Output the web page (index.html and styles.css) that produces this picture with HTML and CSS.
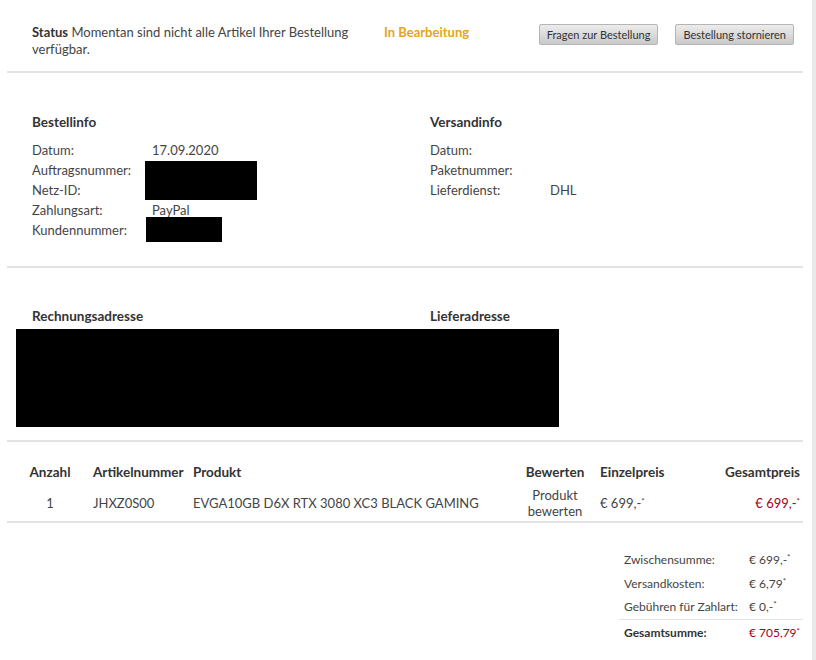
FILE: index.html
```html
<!DOCTYPE html>
<html lang="de">
<head>
  <meta charset="UTF-8">
  <title>Bestellung</title>
  <link rel="stylesheet" href="styles.css">
</head>
<body>
  <div class="page">

    <!-- Status -->
    <div class="section status-bar">
      <div class="status-text"><strong>Status</strong> Momentan sind nicht alle Artikel Ihrer Bestellung verfügbar.</div>
      <div class="status-state">In Bearbeitung</div>
      <div class="actions">
        <button>Fragen zur Bestellung</button>
        <button>Bestellung stornieren</button>
      </div>
    </div>

    <!-- Info -->
    <div class="section info">
      <div class="col">
        <h4>Bestellinfo</h4>
        <div class="grid">
          <span>Datum:</span><span>17.09.2020</span>
          <span>Auftragsnummer:</span><span class="redact r1"></span>
          <span>Netz-ID:</span>
          <span>Zahlungsart:</span><span>PayPal</span>
          <span>Kundennummer:</span><span class="redact r2"></span>
        </div>
      </div>
      <div class="col">
        <h4>Versandinfo</h4>
        <div class="grid">
          <span>Datum:</span><span></span>
          <span>Paketnummer:</span><span></span>
          <span>Lieferdienst:</span><span>DHL</span>
        </div>
      </div>
    </div>

    <!-- Adressen -->
    <div class="section address">
      <div class="address-heads">
        <h4>Rechnungsadresse</h4>
        <h4>Lieferadresse</h4>
      </div>
      <div class="redact r3"></div>
    </div>

    <!-- Artikel -->
    <div class="section items">
      <table>
        <thead>
          <tr>
            <th class="c-qty">Anzahl</th>
            <th class="c-nr">Artikelnummer</th>
            <th class="c-prod">Produkt</th>
            <th class="c-rate">Bewerten</th>
            <th class="c-price">Einzelpreis</th>
            <th class="c-total">Gesamtpreis</th>
          </tr>
        </thead>
        <tbody>
          <tr>
            <td class="c-qty">1</td>
            <td class="c-nr">JHXZ0S00</td>
            <td class="c-prod">EVGA10GB D6X RTX 3080 XC3 BLACK GAMING</td>
            <td class="c-rate">Produkt<br>bewerten</td>
            <td class="c-price">€ 699,-<sup>*</sup></td>
            <td class="c-total red">€ 699,-<sup>*</sup></td>
          </tr>
        </tbody>
      </table>
    </div>

    <!-- Summen -->
    <div class="summary">
      <div class="sum-row"><span>Zwischensumme:</span><span>€ 699,-<sup>*</sup></span></div>
      <div class="sum-row"><span>Versandkosten:</span><span>€ 6,79<sup>*</sup></span></div>
      <div class="sum-row"><span>Gebühren für Zahlart:</span><span>€ 0,-<sup>*</sup></span></div>
      <div class="sum-row total"><span>Gesamtsumme:</span><span class="red">€ 705,79<sup>*</sup></span></div>
    </div>

  </div>
</body>
</html>
```

FILE: styles.css
```css
body { margin: 0; font-family: Lato, 'Open Sans', sans-serif; font-size: 13px; color: #444; background: #fff; }
.page { width: 812px; min-height: 660px; border-right: 4px solid #e9e9e9; }
.section { margin: 0 9px 0 7px; padding: 0 25px; border-bottom: 2px solid #e3e3e3; }
h4 { margin: 0; font-size: 13.5px; font-weight: bold; color: #333; }
.red { color: #a3001b; }
.redact { background: #000; display: block; }

.status-bar { display: flex; align-items: flex-start; padding-top: 24px; padding-bottom: 13px; line-height: 17px; }
.status-text { width: 330px; }
.status-text strong { color: #333; }
.status-state { margin-left: 22px; color: #e6a421; font-weight: bold; }
.actions { margin-left: auto; margin-right: -16px; display: flex; gap: 17px; }
button { font-family: Lato, sans-serif; font-size: 11px; color: #333; height: 21px; padding: 0 7px; border: 1px solid #b5b5b5; border-radius: 2px; background: linear-gradient(#ececec, #c9c9c9); }

.info { display: flex; padding-top: 39px; padding-bottom: 26px; }
.info .col { flex: 0 0 398px; }
.info h4 { line-height: 20px; margin-bottom: 8px; }
.grid { display: grid; grid-template-columns: 120px 1fr; grid-auto-rows: 20px; line-height: 20px; }
.r1 { grid-row: span 2; margin: 1px 0 0 -7px; width: 112px; }
.r2 { margin: -3px 0 -2px -6px; width: 76px; }

.address { padding-top: 38px; padding-bottom: 13px; }
.address-heads { display: flex; line-height: 20px; }
.address-heads h4 { flex: 0 0 398px; }
.r3 { margin: 3px 0 0 -16px; width: 543px; height: 98px; }

.items { padding: 20px 0 0 0; }
table { width: 100%; border-collapse: collapse; table-layout: fixed; }
th { font-size: 13.5px; font-weight: bold; color: #333; line-height: 20px; padding: 0 0 5px 0; }
td { line-height: 16px; vertical-align: middle; padding: 0 0 2px 0; white-space: nowrap; }
.c-qty { width: 86px; text-align: center; }
.c-nr { width: 100px; text-align: left; }
.c-prod { width: 330px; text-align: left; }
.c-rate { width: 64px; text-align: center; }
.c-price { width: 87px; text-align: left; padding-left: 13px; }
.c-total { width: 113px; text-align: right; padding-right: 3px; }
sup { font-size: 8px; vertical-align: top; position: relative; top: -2px; }

.summary { width: 184px; margin: 25px 0 0 619px; font-size: 12px; }
.sum-row { display: flex; line-height: 23.5px; padding-left: 5px; }
.sum-row span:first-child { width: 125px; }
.sum-row.total { border-top: 1px solid #e3e3e3; margin-top: 0; line-height: 26px; font-weight: bold; color: #333; }
.sum-row.total .red { font-weight: normal; }
```
